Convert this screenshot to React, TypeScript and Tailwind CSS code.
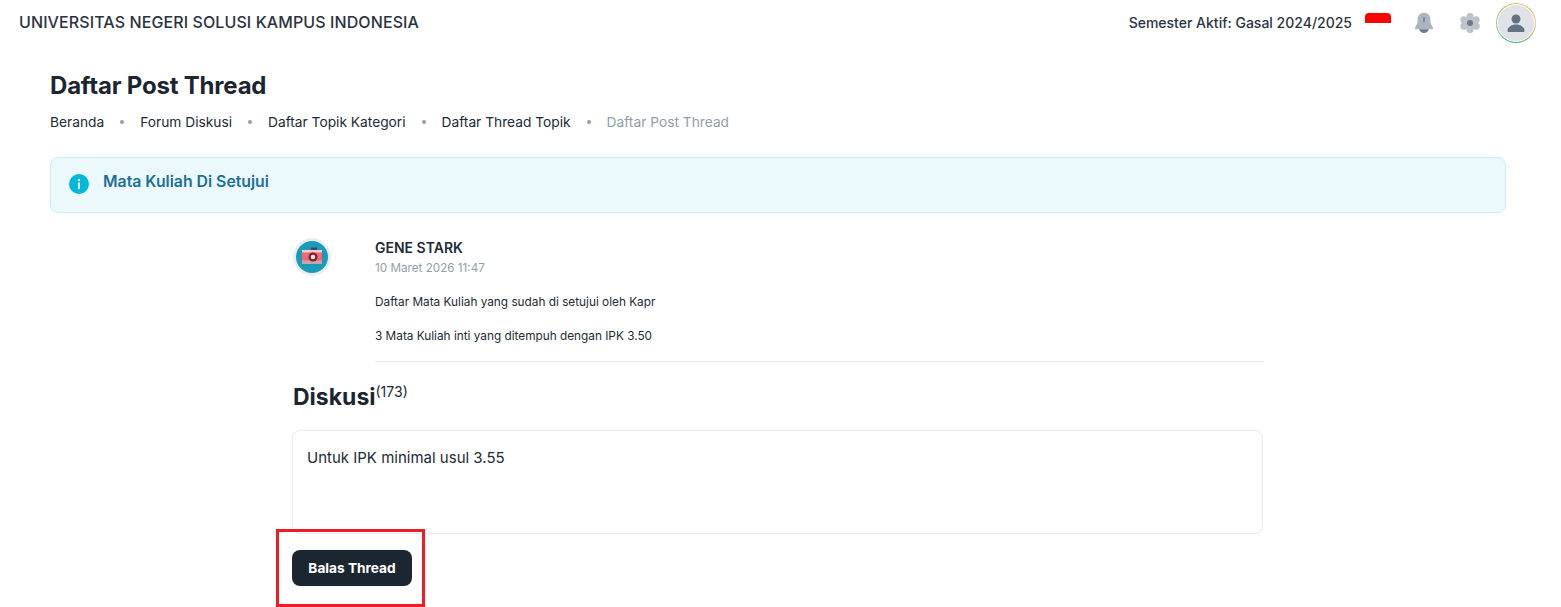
import React from "react";

const crumbs = ["Beranda", "Forum Diskusi", "Daftar Topik Kategori", "Daftar Thread Topik"];

function Bell() {
  return (
    <svg width="20" height="22" viewBox="0 0 20 22">
      <path d="M10 .8C6 .8 3.600 3.800 3.600 7.500v3.300L1.200 15.200c-.5 1 .2 2.100 1.300 2.100h15c1.100 0 1.800-1.100 1.300-2.100l-2.400-4.400V7.500C16.400 3.800 14 .8 10 .8z" fill="#adb5bd" />
      <path d="M5 17.300h10c-.7 2.200-2.700 3.700-5 3.700s-4.300-1.500-5-3.700z" fill="#6c7a89" />
      <rect x="9.300" y="5" width="1.400" height="5.500" rx="0.700" fill="#6c7a89" />
    </svg>
  );
}

function Gear() {
  return (
    <svg width="22" height="22" viewBox="0 0 22 22">
      <g fill="#bcc3ca">
        <circle cx="11" cy="4.500" r="3.500" />
        <circle cx="11" cy="17.500" r="3.500" />
        <circle cx="4.800" cy="7.800" r="3.500" />
        <circle cx="17.200" cy="7.800" r="3.500" />
        <circle cx="4.800" cy="14.200" r="3.500" />
        <circle cx="17.200" cy="14.200" r="3.500" />
        <circle cx="11" cy="11" r="7" />
      </g>
      <circle cx="11" cy="11" r="3" fill="#6c7a89" />
    </svg>
  );
}

function CameraAvatar() {
  return (
    <div className="w-[38px] h-[38px] rounded-full bg-[#eceeef] flex items-center justify-center shrink-0">
      <svg width="32" height="32" viewBox="0 0 32 32">
        <circle cx="16" cy="16" r="16" fill="#1b9bba" />
        <rect x="15" y="6.500" width="6" height="3" fill="#3b4a54" />
        <rect x="6" y="9" width="20" height="14" rx="1" fill="#ef6a75" />
        <rect x="6" y="9" width="20" height="2.500" fill="#f6c9cc" />
        <rect x="6" y="19.500" width="20" height="3.500" fill="#c9a6ac" />
        <circle cx="17" cy="16" r="4.500" fill="#7a2230" />
        <circle cx="17" cy="16" r="2.300" fill="#f6e4e4" />
      </svg>
    </div>
  );
}

export default function App() {
  return (
    <div className="relative h-[607px] overflow-hidden bg-white text-[#1c2630] font-['Inter','Noto_Sans',sans-serif]">
      <header className="h-[45px] flex items-center justify-between pl-[19px] pr-[25px]">
        <span className="-mt-[2px] text-[16px] font-medium text-[#2a3440] tracking-[0.1px]">UNIVERSITAS NEGERI SOLUSI KAMPUS INDONESIA</span>
        <div className="flex items-center">
          <span className="text-[14px] font-medium text-[#2a3440]">Semester Aktif: Gasal 2024/2025</span>
          <span className="ml-[13px] mb-[10px] w-[26px] h-[10px] rounded-t-[4px] bg-[#ff0000]" />
          <span className="ml-[23px] flex"><Bell /></span>
          <span className="ml-[25px] flex"><Gear /></span>
          <span className="ml-[15px] w-[40px] h-[40px] rounded-full p-px bg-[conic-gradient(#e8b85a,#e8c77a,#4caf7a,#9cc9a4,#e8b85a)]">
            <span className="w-full h-full rounded-full bg-[#dfe3e8] flex items-center justify-center border border-white">
              <svg width="22" height="22" viewBox="0 0 22 22">
                <circle cx="11" cy="7" r="4.500" fill="#637381" />
                <path d="M2.500 19c0-4 3.800-6.500 8.500-6.500s8.500 2.500 8.500 6.500c0 .6-.4 1-1 1h-15c-.6 0-1-.4-1-1z" fill="#637381" />
              </svg>
            </span>
          </span>
        </div>
      </header>

      <main className="pl-[50px] pr-[55px]">
        <h1 className="mt-[25px] text-[24px] leading-[32px] font-bold tracking-[-0.2px]">Daftar Post Thread</h1>
        <nav className="mt-[9px] flex items-center text-[13.75px] leading-[22px] text-[#212b36]">
          {crumbs.map((c) => (
            <React.Fragment key={c}>
              <span>{c}</span>
              <span className="mx-[16px] w-1 h-1 rounded-full bg-[#919eab]" />
            </React.Fragment>
          ))}
          <span className="text-[#919eab]">Daftar Post Thread</span>
        </nav>

        <div className="mt-[24px] h-[56px] rounded-[8px] border border-[#c9eef6] bg-[#ebf9fd] flex items-center pl-[18px] pb-[6px]">
          <svg width="20" height="20" viewBox="0 0 20 20" className="mt-[4px]">
            <circle cx="10" cy="10" r="10" fill="#00b8d9" />
            <rect x="9" y="8.500" width="2" height="6.500" rx="0.500" fill="#fff" />
            <circle cx="10" cy="6" r="1.200" fill="#fff" />
          </svg>
          <span className="ml-[14px] text-[15.8px] font-semibold text-[#1b6f98]">Mata Kuliah Di Setujui</span>
        </div>

        <section className="w-[970px] mx-auto mt-[25px]">
          <div className="flex">
            <CameraAvatar />
            <div className="ml-[44px] flex-1 min-w-0 -mt-px">
              <div className="text-[14px] leading-[22px] font-semibold text-[#212b36]">GENE STARK</div>
              <div className="text-[11.7px] leading-[18px] text-[#919eab]">10 Maret 2026 11:47</div>
              <p className="mt-[16px] text-[11.8px] leading-[18px] text-[#212b36]">Daftar Mata Kuliah yang sudah di setujui oleh Kapr</p>
              <p className="mt-[16px] text-[11.8px] leading-[18px] text-[#212b36]">3 Mata Kuliah inti yang ditempuh dengan IPK 3.50</p>
              <div className="mt-[16px] h-px bg-[#e6e8eb]" />
            </div>
          </div>

          <h2 className="mt-[17px] text-[23px] leading-[36px] font-bold">
            Diskusi<sup className="-top-[8px] text-[14px] font-normal">(173)</sup>
          </h2>

          <div className="mt-[15px] -ml-px h-[104px] rounded-[8px] border border-[#e8eaed] px-[14px] pt-[16px] text-[15px] leading-[22px] text-[#212b36]">
            Untuk IPK minimal usul 3.55
          </div>

          <button className="mt-[16px] -ml-px w-[120px] h-[36px] rounded-[8px] bg-[#1c2630] text-white text-[13.7px] font-bold">
            Balas Thread
          </button>
        </section>
      </main>

      {/* red highlight drawn over the button */}
      <div className="absolute left-[276px] top-[529px] w-[149px] h-[78px] border-[3px] border-[#ee1c25]" />
    </div>
  );
}
